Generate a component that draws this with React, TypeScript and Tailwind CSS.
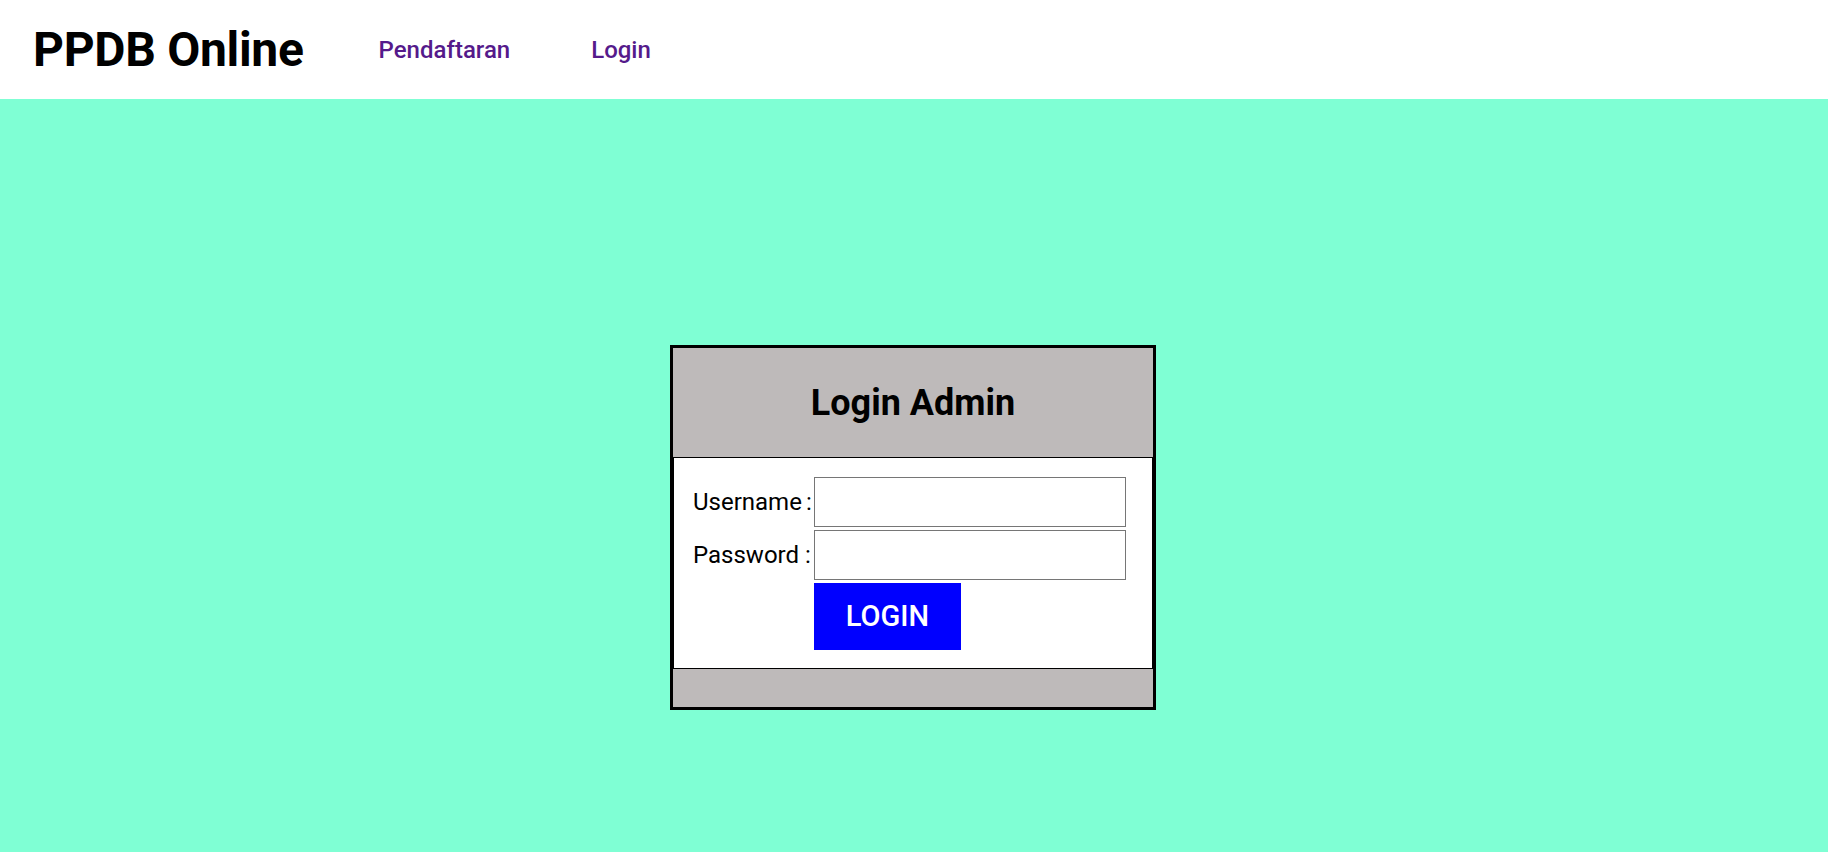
import React from "react";

export default function App() {
  return (
    <div className="flex min-h-screen flex-col bg-[#7fffd4] font-['Roboto',sans-serif] text-black">
      <header className="flex h-[99px] items-center bg-white px-[33px]">
        <h1 className="text-[48px] font-bold leading-none tracking-[-0.3px]">PPDB Online</h1>
        <a href="#" className="ml-[75px] text-[24px] font-medium leading-none text-[#551a8b]">
          Pendaftaran
        </a>
        <a href="#" className="ml-[81px] text-[24px] font-medium leading-none text-[#551a8b]">
          Login
        </a>
      </header>
      <main className="flex flex-1 justify-center pt-[246px]">
        <div className="mr-[2px] flex h-[365px] w-[486px] flex-col border-[3px] border-black bg-[#bebaba]">
          <div className="flex h-[109px] items-center justify-center">
            <h2 className="text-[36px] font-bold leading-none">Login Admin</h2>
          </div>
          <div className="border border-black bg-white pb-[18px] pl-[19px] pt-[19px]">
            <div className="grid grid-cols-[121px_312px] gap-y-[3px]">
              <div className="flex h-[50px] items-center text-[24px] leading-none">
                <span>Username</span>
                <span className="ml-[4px]">:</span>
              </div>
              <input type="text" className="h-[50px] w-[312px] border border-[#767676] bg-white outline-none" />
              <div className="flex h-[50px] items-center text-[24px] leading-none">
                <span>Password</span>
                <span className="ml-[6px]">:</span>
              </div>
              <input type="password" className="h-[50px] w-[312px] border border-[#767676] bg-white outline-none" />
              <div />
              <button className="flex h-[67px] w-[147px] items-center justify-center bg-[#0000ff] text-[29px] font-medium leading-none text-white">
                LOGIN
              </button>
            </div>
          </div>
          <div className="flex-1" />
        </div>
      </main>
    </div>
  );
}
